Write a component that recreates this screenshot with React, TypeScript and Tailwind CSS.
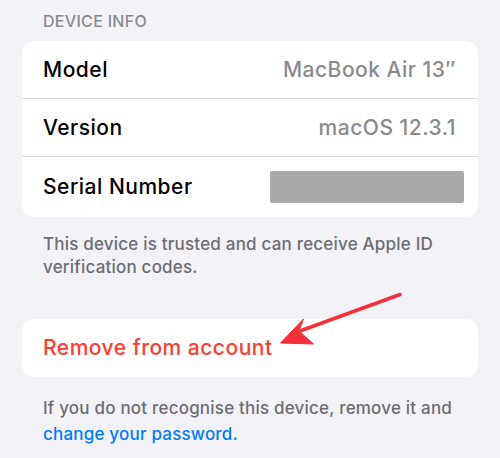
import React from "react";

export default function App() {
  const font = { fontFamily: "Inter, 'Noto Sans', sans-serif" };
  return (
    <div className="relative w-[500px] h-[458px] overflow-hidden bg-[#f2f2f7]" style={font}>
      <div className="pl-[43px] pt-[11px] text-[16px] leading-[20px] text-[#8a8a8e] font-medium tracking-[0.3px]">DEVICE INFO</div>
      <div className="mx-[22px] mt-[10px] bg-white rounded-[12px] overflow-hidden">
        <div className="flex items-center justify-between pl-[21px] pr-[22px] h-[58px] border-b border-[#dcdce0]">
          <span className="text-[21px] font-medium text-black tracking-[0.5px]">Model</span>
          <span className="text-[21px] font-medium text-[#8a8a8e] tracking-[0.5px]">MacBook Air 13″</span>
        </div>
        <div className="flex items-center justify-between pl-[21px] pr-[22px] h-[58px] border-b border-[#dcdce0]">
          <span className="text-[21px] font-medium text-black tracking-[0.5px]">Version</span>
          <span className="text-[21px] font-medium text-[#8a8a8e] tracking-[0.5px]">macOS 12.3.1</span>
        </div>
        <div className="flex items-center justify-between pl-[21px] pr-[14px] h-[60px]">
          <span className="text-[21px] font-medium text-black tracking-[0.5px]">Serial Number</span>
          <div className="w-[194px] h-[32px] bg-[#a9a9a9] rounded-[2px]" />
        </div>
      </div>
      <p className="pl-[43px] pr-[20px] pt-[16px] text-[17px] leading-[23px] font-medium tracking-[0.2px] text-[#6d6d72]">
        This device is trusted and can receive Apple ID
        <br />
        verification codes.
      </p>
      <div className="mx-[22px] mt-[40px] h-[58px] bg-white rounded-[12px] flex items-center pl-[21px]">
        <span className="text-[21px] font-medium text-[#ff3b30] tracking-[0.5px]">Remove from account</span>
      </div>
      <p className="pl-[43px] pr-[10px] pt-[18px] text-[17px] leading-[26px] font-medium tracking-[0.2px] text-[#6d6d72]">
        If you do not recognise this device, remove it and
        <br />
        <span className="text-[#007aff]">change your password.</span>
      </p>
      <svg className="absolute left-0 top-0" width="500" height="458" viewBox="0 0 500 458">
        <path d="M400 294.5 L300 331" stroke="#f5303a" strokeWidth="3.5" strokeLinecap="round" />
        <path d="M280.5 343 L303.5 319 L299 331 L313.5 344 Z" fill="#f5303a" stroke="#f5303a" strokeWidth="1" strokeLinejoin="round" />
      </svg>
    </div>
  );
}
